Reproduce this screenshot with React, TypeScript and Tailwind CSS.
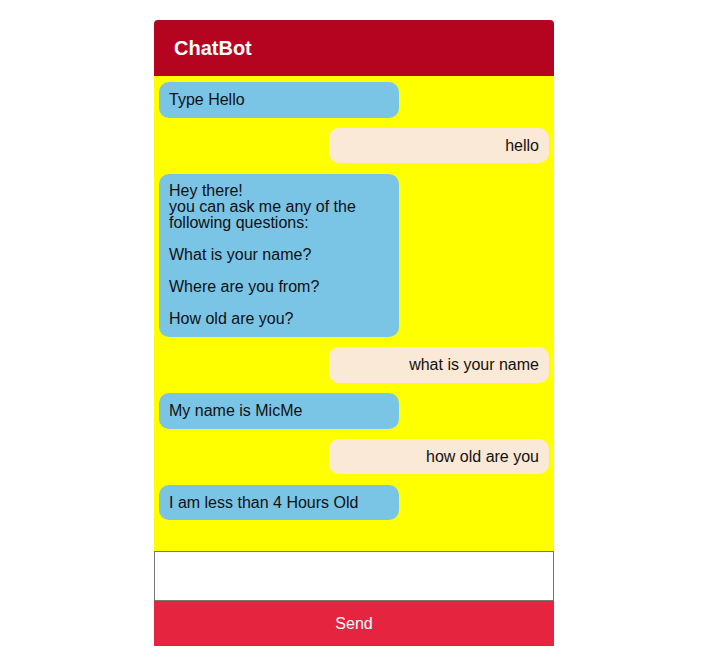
import React from "react";

type Msg = { from: "bot" | "user"; lines: string[] };

const messages: Msg[] = [
  { from: "bot", lines: ["Type Hello"] },
  { from: "user", lines: ["hello"] },
  {
    from: "bot",
    lines: [
      "Hey there!",
      "you can ask me any of the",
      "following questions:",
      "",
      "What is your name?",
      "",
      "Where are you from?",
      "",
      "How old are you?",
    ],
  },
  { from: "user", lines: ["what is your name"] },
  { from: "bot", lines: ["My name is MicMe"] },
  { from: "user", lines: ["how old are you"] },
  { from: "bot", lines: ["I am less than 4 Hours Old"] },
];

export default function App() {
  return (
    <div
      className="w-[710px] h-[672px] bg-white pt-[20px] pl-[154px]"
      style={{ fontFamily: '"Liberation Sans", Arial, sans-serif' }}
    >
      <div className="w-[400px] flex flex-col">
        <div className="h-[56px] bg-[#b5041f] rounded-t-[4px] flex items-center pl-[20px]">
          <span className="text-white text-[20px] font-bold leading-none">ChatBot</span>
        </div>
        <div className="h-[475px] bg-[#ffff00] flex flex-col gap-[10.3px] pt-[6px] px-[5px]">
          {messages.map((m, i) =>
            m.from === "bot" ? (
              <div
                key={i}
                className="w-[240px] self-start bg-[#7ac4e6] rounded-[10px] px-[10px] py-[9.75px] text-[16px] leading-[16px] text-[#111]"
              >
                {m.lines.map((l, j) => (
                  <div key={j} className="h-[16px] whitespace-nowrap">
                    {l}
                  </div>
                ))}
              </div>
            ) : (
              <div
                key={i}
                className="w-[220px] self-end bg-[#f9e9d6] rounded-[10px] px-[10px] py-[9.75px] text-[16px] leading-[16px] text-[#111] text-right"
              >
                {m.lines.map((l, j) => (
                  <div key={j} className="h-[16px] whitespace-nowrap">
                    {l}
                  </div>
                ))}
              </div>
            )
          )}
        </div>
        <input
          className="h-[50px] w-[400px] border border-[#767676] bg-white outline-none px-2 text-[16px]"
          type="text"
        />
        <button className="h-[45px] w-[400px] bg-[#e52540] text-white text-[16px] leading-none">
          Send
        </button>
      </div>
    </div>
  );
}
